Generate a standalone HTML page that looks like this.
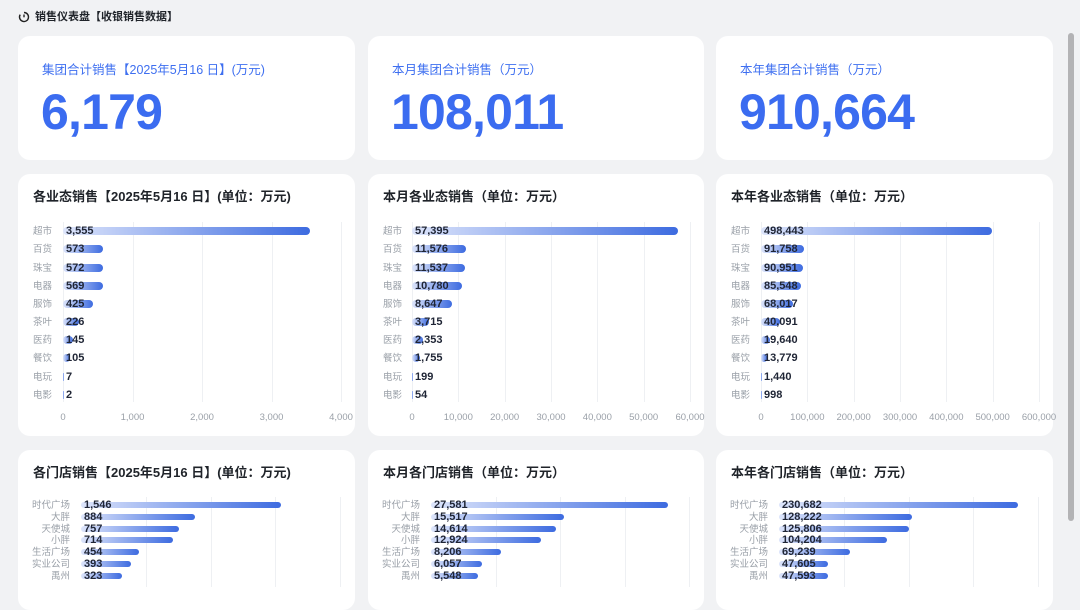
<!DOCTYPE html>
<html><head><meta charset="utf-8"><style>
*{margin:0;padding:0;box-sizing:border-box}
body{width:1080px;height:583px;overflow:hidden;background:#f1f2f4;font-family:"Liberation Sans","Noto Sans CJK SC",sans-serif;position:relative;color:#1f2329}
.card{position:absolute;background:#fff;border-radius:12px}
.abs{position:absolute;white-space:nowrap;line-height:1}
.kt{font-size:12.5px;color:#3e6ff0}
.kv{font-size:50px;font-weight:bold;color:#3b6cf0;letter-spacing:-0.8px}
.ct{font-size:13px;font-weight:bold;color:#1f2329}
.lab{font-size:9.5px;color:#9aa0a8}
.ax{font-size:9.5px;color:#9aa0a8}
.grid{position:absolute;width:1px;background:#eef0f3}
.bar{position:absolute;border-radius:4px;background:linear-gradient(90deg,#dde5fb,#3d6be0)}
.val{font-size:11px;font-weight:bold;color:#1f2535}
#sb{position:absolute;left:1068px;top:33px;width:6px;height:488px;border-radius:3px;background:#b3b3b5}
</style></head><body>
<svg class="abs" style="left:18px;top:11px" width="12" height="12" viewBox="0 0 12 12"><path d="M6 1.5 A4.5 4.5 0 1 1 2.2 3.6" fill="none" stroke="#222" stroke-width="1.4"/><path d="M6 3.5V6.3" stroke="#222" stroke-width="1.4"/></svg>
<div class="abs" style="left:35px;top:12px;font-size:11px;font-weight:bold">销售仪表盘【收银销售数据】</div>
<div id="sb"></div>
<div id="root"></div>
<script>
var R=document.getElementById('root'),h='';
function A(s){h+=s}
var cx=[18,368,716],cw=[337,336,337];
var kt=['集团合计销售【2025年5月16 日】(万元)','本月集团合计销售（万元）','本年集团合计销售（万元）'];
var kv=['6,179','108,011','910,664'];
for(var i=0;i<3;i++){
A('<div class="card" style="left:'+cx[i]+'px;top:36px;width:'+cw[i]+'px;height:124px"></div>');
A('<div class="abs kt" style="left:'+(cx[i]+24)+'px;top:64px">'+kt[i]+'</div>');
A('<div class="abs kv" style="left:'+(cx[i]+23)+'px;top:87px">'+kv[i]+'</div>');
A('<div class="card" style="left:'+cx[i]+'px;top:174px;width:'+cw[i]+'px;height:262px"></div>');
A('<div class="card" style="left:'+cx[i]+'px;top:450px;width:'+cw[i]+'px;height:160px"></div>');
}
var t2=['各业态销售【2025年5月16 日】(单位：万元)','本月各业态销售（单位：万元）','本年各业态销售（单位：万元）'];
var t3=['各门店销售【2025年5月16 日】(单位：万元)','本月各门店销售（单位：万元）','本年各门店销售（单位：万元）'];
var cats=['超市','百货','珠宝','电器','服饰','茶叶','医药','餐饮','电玩','电影'];
var vals=[[3555,573,572,569,425,226,145,105,7,2],[57395,11576,11537,10780,8647,3715,2353,1755,199,54],[498443,91758,90951,85548,68017,40091,19640,13779,1440,998]];
var mx=[4000,60000,600000],steps=[4,6,6];
var x0=[63,412,761],x1=[341,690,1039];
function fmt(n){return n.toString().replace(/\B(?=(\d{3})+(?!\d))/g,',')}
var rowy=[231,249,268,286,304,322,340,358,377,395];
for(var i=0;i<3;i++){
A('<div class="abs ct" style="left:'+(cx[i]+15)+'px;top:190px">'+t2[i]+'</div>');
var W=x1[i]-x0[i];
for(var g=0;g<=steps[i];g++){var gx=x0[i]+W*g/steps[i];
A('<div class="grid" style="left:'+gx+'px;top:222px;height:180px"></div>');
A('<div class="abs ax" style="left:'+(gx-20)+'px;width:40px;text-align:center;top:413px">'+fmt(mx[i]*g/steps[i])+'</div>');}
for(var r=0;r<10;r++){var y=rowy[r];var bw=Math.max(1,W*vals[i][r]/mx[i]);
A('<div class="abs lab" style="left:'+(cx[i]+15)+'px;top:'+(y-4)+'px">'+cats[r]+'</div>');
A('<div class="bar" style="left:'+x0[i]+'px;top:'+(y-4)+'px;width:'+bw+'px;height:8px"></div>');
A('<div class="abs val" style="left:'+(x0[i]+3)+'px;top:'+(y-5)+'px">'+fmt(vals[i][r])+'</div>');}
}
var st=['时代广场','大胖','天使城','小胖','生活广场','实业公司','禹州'];
var sv=[[1546,884,757,714,454,393,323],[27581,15517,14614,12924,8206,6057,5548],[230682,128222,125806,104204,69239,47605,47593]];
var s0=[81,431,779],se=[[281,195,179,173,139,131,122],[668,564,556,541,501,482,478],[1018,912,909,887,850,828,828]];
var sy=[505,517,529,540,552,564,576];
for(var i=0;i<3;i++){
A('<div class="abs ct" style="left:'+(cx[i]+15)+'px;top:466px">'+t3[i]+'</div>');
var gs=(cx[i]+cw[i]-15-s0[i])/4;
for(var g=1;g<=4;g++)A('<div class="grid" style="left:'+(s0[i]+gs*g)+'px;top:497px;height:90px"></div>');
for(var r=0;r<7;r++){var y=sy[r];
A('<div class="abs lab" style="left:'+(cx[i]+5)+'px;width:'+(s0[i]-cx[i]-16)+'px;text-align:right;top:'+(y-4)+'px">'+st[r]+'</div>');
A('<div class="bar" style="left:'+s0[i]+'px;top:'+(y-3)+'px;width:'+(se[i][r]-s0[i])+'px;height:6px;border-radius:3px"></div>');
A('<div class="abs val" style="left:'+(s0[i]+3)+'px;top:'+(y-5)+'px">'+fmt(sv[i][r])+'</div>');}
}
R.innerHTML=h;
</script>
</body></html>
